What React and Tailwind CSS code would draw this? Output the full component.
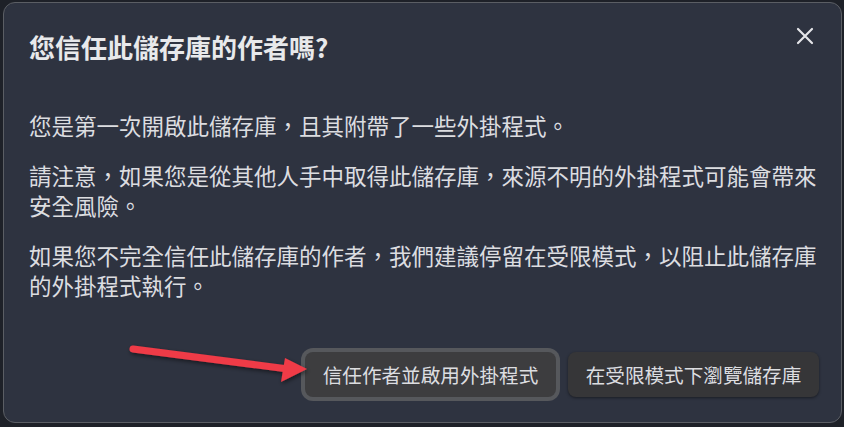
import React from "react";

export default function App() {
  const font = { fontFamily: '"Noto Sans CJK TC", "Noto Sans", sans-serif' };
  return (
    <div
      className="relative w-[844px] h-[427px] overflow-hidden bg-[#1e2128] pt-[2px] pl-[3px]"
      style={font}
    >
      <div className="relative w-[839px] h-[421px] rounded-[12px] border border-[#5b5e64] bg-[#2e3340] pt-[26px] pl-[25px] pr-[22px] flex flex-col">
        <h1 className="text-[26px] leading-[36px] font-bold text-[#e8e9eb]">
          您信任此儲存庫的作者嗎?
        </h1>
        <button className="absolute top-[23px] right-[26px] w-[20px] h-[20px] flex items-center justify-center">
          <svg width="18" height="18" viewBox="0 0 18 18">
            <path d="M2 2 L16 16 M16 2 L2 16" stroke="#e4e5e8" strokeWidth="2.2" strokeLinecap="round" />
          </svg>
        </button>
        <div className="mt-[45px] w-[792px] text-[22.5px] leading-[30px] text-[#dcdde0] flex flex-col gap-[20px]">
          <p>您是第一次開啟此儲存庫，且其附帶了一些外掛程式。</p>
          <p>請注意，如果您是從其他人手中取得此儲存庫，來源不明的外掛程式可能會帶來安全風險。</p>
          <p>如果您不完全信任此儲存庫的作者，我們建議停留在受限模式，以阻止此儲存庫的外掛程式執行。</p>
        </div>
        <div className="mt-[52px] flex justify-end gap-[12px]">
          <button className="w-[251px] h-[45px] rounded-[8px] bg-[#3d3d3f] text-[19.6px] text-[#dcdde0] ring-[4px] ring-[#56585c] flex items-center justify-center">
            信任作者並啟用外掛程式
          </button>
          <button className="w-[251px] h-[45px] rounded-[8px] bg-[#363638] text-[19.6px] text-[#dcdde0] shadow-[0_1px_3px_rgba(0,0,0,0.45)] flex items-center justify-center">
            在受限模式下瀏覽儲存庫
          </button>
        </div>
      </div>
      <svg
        className="absolute left-0 top-0 pointer-events-none"
        width="844"
        height="427"
        viewBox="0 0 844 427"
      >
        <defs>
          <filter id="sh" x="-10%" y="-50%" width="120%" height="200%">
            <feDropShadow dx="1" dy="2" stdDeviation="2" floodColor="#000" floodOpacity="0.5" />
          </filter>
        </defs>
        <g filter="url(#sh)">
          <line x1="133" y1="349" x2="288" y2="369" stroke="#ef3b47" strokeWidth="7" strokeLinecap="round" />
          <polygon points="285,358 307,369 281,382" fill="#ef3b47" />
        </g>
      </svg>
    </div>
  );
}
